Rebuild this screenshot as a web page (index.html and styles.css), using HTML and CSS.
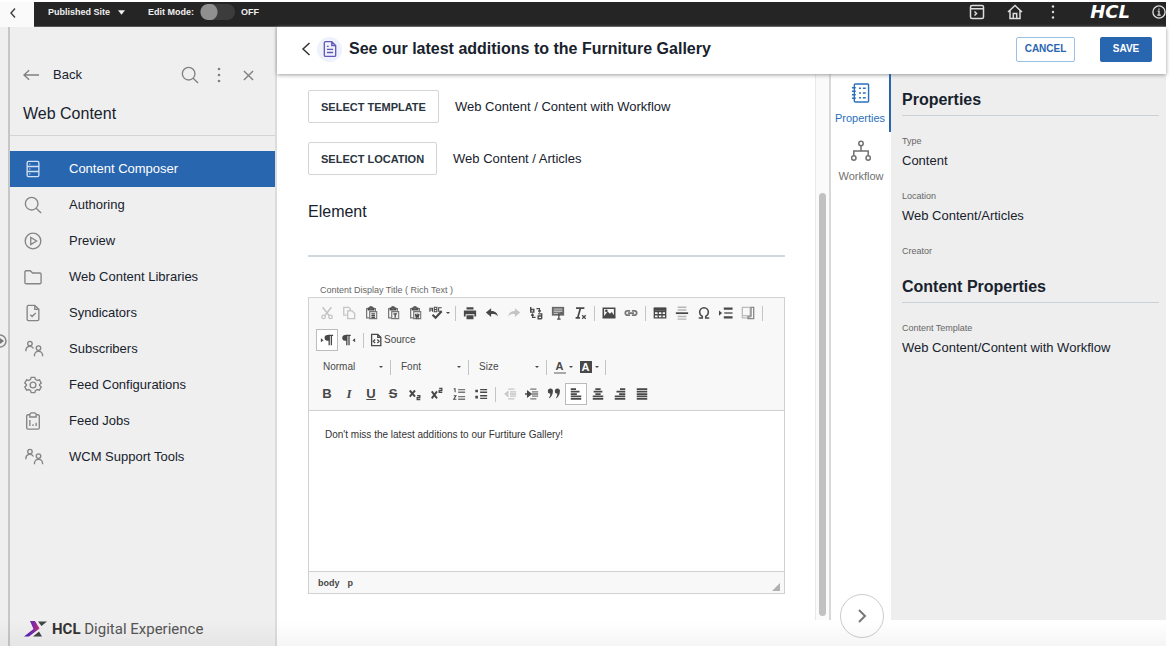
FILE: index.html
```html
<!DOCTYPE html>
<html lang="en">
<head>
<meta charset="utf-8">
<title>Web Content</title>
<link rel="stylesheet" href="styles.css">
</head>
<body>
<svg class="defs" aria-hidden="true">
  <symbol id="people" viewBox="0 0 20 20"><circle cx="5.500" cy="4" r="2.500"/><path d="M1 12.500v-1a4.500 4.500 0 0 1 8.500-2"/><circle cx="15" cy="9" r="2.500"/><path d="M10.500 18v-1a4.500 4.500 0 0 1 9 0v1"/></symbol>
  <symbol id="search" viewBox="0 0 20 20"><circle cx="8.500" cy="8.500" r="7"/><path d="M13.500 13.500L19 19"/></symbol>
  <symbol id="clip" viewBox="0 0 16 16"><path d="M11.500 3H13v4M4.500 3H3v10.500h3" fill="none" stroke="#777" stroke-width="1.400"/><path d="M5 4.500V2.500h1.500L7 1h2l.5 1.500H11v2z" fill="#777"/><path d="M6.500 6.500h8v8h-8z" fill="#eee" stroke="#777" stroke-width="1.300"/></symbol>
</svg>
<div class="app">
  <header class="topbar">
    <button class="collapse" aria-label="Collapse"><svg viewBox="0 0 10 12" width="10" height="12"><path d="M7 1.500L3 6l4 4.500"/></svg></button>
    <div class="topbar-main">
      <button class="site">Published Site <svg viewBox="0 0 8 5" width="7" height="5"><path d="M0 0h8L4 5z"/></svg></button>
      <label class="mode">Edit Mode: <input type="checkbox" role="switch" class="switch"><span>OFF</span></label>
      <nav class="tools">
        <button aria-label="Console"><svg viewBox="0 0 16 16" width="16" height="16"><rect x="1.500" y="1.500" width="13" height="13" rx="1.500"/><path d="M1.500 4.800h13M5.500 7.500l2 2-2 2"/></svg></button>
        <button aria-label="Home"><svg viewBox="0 0 16 16" width="16" height="16"><path d="M1 8l7-6.500L15 8M3 6.500v8h10v-8M6.300 14.500v-5h3.400v5"/></svg></button>
        <button aria-label="More"><svg viewBox="0 0 16 16" width="16" height="16" class="dots"><circle cx="8" cy="2.500" r="1.200"/><circle cx="8" cy="8" r="1.200"/><circle cx="8" cy="13.500" r="1.200"/></svg></button>
        <span class="brand">HCL</span>
        <button aria-label="Information"><svg viewBox="0 0 16 16" width="14" height="14"><circle cx="8" cy="8" r="7"/><path d="M6.500 7H8v4.500M6 11.500h4M8 4v1.500"/></svg></button>
      </nav>
    </div>
  </header>

  <div class="workspace">
    <div class="rail"><button class="rail-toggle" aria-label="Expand"><svg viewBox="0 0 14 14" width="14" height="14"><circle cx="7" cy="7" r="6"/><path d="M7 4l4 3-4 3z" fill="#777" stroke="none"/></svg></button></div>

    <aside class="sidebar">
      <div class="side-head">
        <div class="side-row">
          <button class="back"><svg viewBox="0 0 18 12" width="17" height="12"><path d="M17 6H1M6.500 1L1 6l5.500 5"/></svg>Back</button>
          <button aria-label="Search"><svg width="18" height="18"><use href="#search"/></svg></button>
          <button aria-label="More"><svg viewBox="0 0 4 16" width="4" height="16" class="dots"><circle cx="2" cy="2" r="1.300"/><circle cx="2" cy="8" r="1.300"/><circle cx="2" cy="14" r="1.300"/></svg></button>
          <button aria-label="Close"><svg viewBox="0 0 12 12" width="11" height="11"><path d="M1 1l10 10M11 1L1 11"/></svg></button>
        </div>
        <h2>Web Content</h2>
      </div>
      <nav class="menu">
        <a href="#" class="active"><svg viewBox="0 0 20 20" width="18" height="18"><rect x="3.500" y="1.500" width="13" height="17" rx="1.500"/><path d="M3.500 7.200h13M3.500 12.800h13M6 4.500h1M6 10h1M6 15.500h1"/></svg>Content Composer</a>
        <a href="#"><svg width="18" height="18"><use href="#search"/></svg>Authoring</a>
        <a href="#"><svg viewBox="0 0 20 20" width="18" height="18"><circle cx="10" cy="10" r="8.700"/><path d="M7.500 6v8l6.500-4z"/></svg>Preview</a>
        <a href="#"><svg viewBox="0 0 20 20" width="18" height="18"><path d="M1 4.500A1.500 1.500 0 0 1 2.500 3H7l2.500 2.500h8A1.500 1.500 0 0 1 19 7v9a1.500 1.500 0 0 1-1.500 1.500h-15A1.500 1.500 0 0 1 1 16z"/></svg>Web Content Libraries</a>
        <a href="#"><svg viewBox="0 0 20 20" width="18" height="18"><path d="M12 1.500H5A1.500 1.500 0 0 0 3.500 3v14A1.500 1.500 0 0 0 5 18.500h10a1.500 1.500 0 0 0 1.500-1.500V6zM12 1.500V6h4.500M7 12l2 2 4-4"/></svg>Syndicators</a>
        <a href="#"><svg width="20" height="18"><use href="#people"/></svg>Subscribers</a>
        <a href="#"><svg viewBox="0 0 20 20" width="18" height="18"><circle cx="10" cy="10" r="3.200"/><path d="M8 1.500h4l.7 2.300 2 1.200 2.400-.7 2 3.500L17.300 9.500v1l1.800 1.700-2 3.500-2.400-.7-2 1.200-.7 2.300H8l-.7-2.300-2-1.200-2.400.7-2-3.500 1.800-1.700v-1L.9 7.800l2-3.500 2.400.7 2-1.200z"/></svg>Feed Configurations</a>
        <a href="#"><svg viewBox="0 0 20 20" width="18" height="18"><path d="M6.500 3H4.500A1.500 1.500 0 0 0 3 4.500v13A1.500 1.500 0 0 0 4.500 19h11a1.500 1.500 0 0 0 1.500-1.500v-13A1.500 1.500 0 0 0 15.500 3h-2M6.500 5.500V2.200L8 1h4l1.500 1.200v3.300zM6.500 9v6.500M10 13.500v2M13.500 12v3.500"/></svg>Feed Jobs</a>
        <a href="#"><svg width="20" height="18"><use href="#people"/></svg>WCM Support Tools</a>
      </nav>
      <footer class="product">
        <svg viewBox="0 0 24 16" width="24" height="16"><defs><linearGradient id="arrow" x1="0" x2="1"><stop offset="0" stop-color="#4b1fb8"/><stop offset=".6" stop-color="#7a2aa8"/><stop offset="1" stop-color="#d6246e"/></linearGradient></defs><path d="M6 0h5l4.500 7.500L5 15.500H0L9.500 8z" fill="url(#arrow)"/><path d="M14 .5h9l-5.500 4.500zM15 10.500l3 5h-9z" fill="#444"/></svg>
        <span><b>HCL</b> Digital Experience</span>
      </footer>
    </aside>

    <main class="main">
      <header class="page-head">
        <button class="prev" aria-label="Back"><svg viewBox="0 0 10 16" width="10" height="16"><path d="M8.500 2L2 8l6.500 6"/></svg></button>
        <span class="doc"><svg viewBox="0 0 16 20" width="14" height="18"><path d="M10 1.500H3A1.500 1.500 0 0 0 1.500 3v14A1.500 1.500 0 0 0 3 18.500h10a1.500 1.500 0 0 0 1.500-1.500V6zM10 1.500V6h4.500M4.500 10.500h7M4.500 14h7M4.500 7h2"/></svg></span>
        <h1>See our latest additions to the Furniture Gallery</h1>
        <button class="btn cancel">CANCEL</button>
        <button class="btn save">SAVE</button>
      </header>

      <div class="panes">
        <section class="form">
          <div class="pick"><button>SELECT TEMPLATE</button><span>Web Content / Content with Workflow</span></div>
          <div class="pick"><button>SELECT LOCATION</button><span>Web Content / Articles</span></div>
          <h2>Element</h2>
          <label class="field-label" for="rich">Content Display Title ( Rich Text )</label>
          <div class="editor">
            <div class="toolbar">
              <div class="tb-row">
                <button aria-label="Cut" class="off"><svg viewBox="0 0 16 16"><path d="M3 1.500l7.500 9.500M13 1.500L5.500 11" stroke-width="1.800"/><circle cx="4" cy="12.500" r="2"/><circle cx="12" cy="12.500" r="2"/></svg></button>
                <button aria-label="Copy" class="off"><svg viewBox="0 0 16 16"><path d="M5.500 10.500H2v-9h5.500l2 2V5M6.500 5.500h5l3 3v6h-8z"/></svg></button>
                <button aria-label="Paste"><svg viewBox="0 0 16 16"><use href="#clip"/><path d="M8.500 9h4M8.500 11h4M8.500 13h4"/></svg></button>
                <button aria-label="Paste as text"><svg viewBox="0 0 16 16"><use href="#clip"/><path d="M8.500 9h4M10.500 9v4.500"/></svg></button>
                <button aria-label="Paste from Word"><svg viewBox="0 0 16 16"><use href="#clip"/><path d="M8.500 9l1 4 1-3 1 3 1-4"/></svg></button>
                <button aria-label="Spell check" class="drop"><svg viewBox="0 0 16 16"><path d="M1 6.500v-4h3v4M1 4.500h3M6 1.500v5h3v-5H6zm0 2.500h3M14.500 2H11v4h3.500" stroke-width="1.200"/><path d="M4 10l3.500 3.500L14.500 6" stroke-width="2.400"/></svg><i class="caret"></i></button>
                <i class="sep"></i>
                <button aria-label="Print"><svg viewBox="0 0 16 16"><path d="M4 1.500h8V4H4zM1 5h14v7h-2V9.500H3V12H1zM4 10.500h8V15H4z" fill="#484848" stroke="none"/></svg></button>
                <button aria-label="Undo"><svg viewBox="0 0 16 16"><path d="M7 2.500v3.200c4 0 7 2 8 6.300-2-2.500-4.500-3-8-2.800v3.300l-6-5z" fill="#484848" stroke="none"/></svg></button>
                <button aria-label="Redo"><svg viewBox="0 0 16 16"><path d="M9 2.500v3.200c-4 0-7 2-8 6.300 2-2.500 4.500-3 8-2.800v3.300l6-5z" fill="#c4c4c4" stroke="none"/></svg></button>
                <button aria-label="Replace"><svg viewBox="0 0 16 16"><path d="M2 1v6h3.500V4H2M14.500 14.500V9H10.500M14.500 11.500h-4v3h4" stroke-width="1.600"/><path d="M8.500 3H12v3M10.500 5L12 7l1.500-2M7.500 13H4v-3M2.500 11L4 9l1.500 2" stroke-width="1.200"/></svg></button>
                <button aria-label="Select all"><svg viewBox="0 0 16 16"><path d="M1 1h14v10H1z" fill="#666" stroke="none"/><path d="M3 3.500h10M3 6h10M3 8.500h7" stroke="#bbb"/><path d="M9 8v7M7 15h4"/></svg></button>
                <button aria-label="Remove format"><svg viewBox="0 0 16 16"><path d="M3.500 2.500H13M8.500 2.500L5.500 13M3 13.500h5" stroke-width="2"/><path d="M10.500 10.500l4 4M14.500 10.500l-4 4" stroke-width="1.500"/></svg></button>
                <i class="sep"></i>
                <button aria-label="Image"><svg viewBox="0 0 16 16"><path d="M1.500 2.500h13v11h-13z" stroke-width="1.800"/><path d="M3 12l3.500-4.500L9 10l2-2 3 4z" fill="#484848"/><circle cx="5" cy="5.500" r=".8"/></svg></button>
                <button aria-label="Link"><svg viewBox="0 0 16 16"><path d="M7 5.500H4a2.500 2.500 0 0 0 0 5h3M9 5.500h3a2.500 2.500 0 0 1 0 5H9M4.500 8h7" stroke="#777" stroke-width="2"/></svg></button>
                <i class="sep"></i>
                <button aria-label="Table"><svg viewBox="0 0 16 16"><path d="M1.500 2.500h13v11h-13zM1.500 10h13M6 5v8.500M10.300 5v8.500M1.500 6.500h13"/><path d="M1 2h14v3.500H1z" fill="#484848" stroke="none"/></svg></button>
                <button aria-label="Horizontal line"><svg viewBox="0 0 16 16"><path d="M3 1.500h10M3 4.500h10M3 12h10M3 15h10" stroke="#b5b5b5" stroke-width="1.600"/><path d="M1 8.200h14" stroke-width="2"/></svg></button>
                <button aria-label="Special character"><svg viewBox="0 0 16 16"><path d="M2 13.800h4v-2C3.800 10.500 3 9 3 7a5 5 0 0 1 10 0c0 2-.8 3.500-3 4.800v2h4" stroke-width="1.800"/></svg></button>
                <button aria-label="Page break"><svg viewBox="0 0 16 16"><path d="M0 5l3.500 3L0 11z" fill="#484848" stroke="none"/><path d="M5.500 3h10M5.500 13h10" stroke-width="2.600"/><path d="M6 8h9.500" stroke-width="1.500"/></svg></button>
                <button aria-label="Frame"><svg viewBox="0 0 16 16"><path d="M1.500 1.500h9v12h-9zM1.500 11h6" stroke="#bbb"/><path d="M11.500 1.500h3v13H8v-3h3.500z" stroke="#888"/></svg></button>
                <i class="sep"></i>
              </div>
              <div class="tb-row">
                <button aria-label="Left to right" class="on"><svg viewBox="0 0 16 16"><path d="M1 6l3 2.200-3 2.300z" fill="#484848" stroke="none"/><path d="M10 3H8.500a2.500 2.500 0 0 0 0 5H10z" fill="#484848"/><path d="M10.500 3v11M13 3v11M9 2.800h6" stroke-width="1.500"/></svg></button>
                <button aria-label="Right to left"><svg viewBox="0 0 16 16"><path d="M15 6l-3 2.200 3 2.300z" fill="#484848" stroke="none"/><path d="M5 3H3.500a2.500 2.500 0 0 0 0 5H5z" fill="#484848"/><path d="M5.500 3v11M8 3v11M4 2.800h6" stroke-width="1.500"/></svg></button>
                <i class="sep"></i>
                <button class="source"><svg viewBox="0 0 16 16"><path d="M10 1.500H3v13h10.500V5zM10 1.500V5h3.500M7 7.500L5 9.500l2 2M9.500 7.500l2 2-2 2"/></svg>Source</button>
              </div>
              <div class="tb-row">
                <span class="combo"><select aria-label="Paragraph format"><option>Normal</option></select><i class="caret"></i></span><i class="sep"></i>
                <span class="combo"><select aria-label="Font"><option>Font</option></select><i class="caret"></i></span><i class="sep"></i>
                <span class="combo"><select aria-label="Size"><option>Size</option></select><i class="caret"></i></span><i class="sep"></i>
                <button aria-label="Text color" class="drop"><span class="ink">A</span><i class="caret"></i></button>
                <button aria-label="Background color" class="drop"><span class="ink fill">A</span><i class="caret"></i></button>
                <i class="sep"></i>
              </div>
              <div class="tb-row">
                <button><b>B</b></button>
                <button><b class="ital">I</b></button>
                <button><b class="under">U</b></button>
                <button><b class="strike">S</b></button>
                <button aria-label="Subscript"><svg viewBox="0 0 16 16"><path d="M2 4l6 7M8 4l-6 7" stroke-width="2.200"/><path d="M10.500 10h3v2.300h-3v2.200h3.500"/></svg></button>
                <button aria-label="Superscript"><svg viewBox="0 0 16 16"><path d="M2 5l6 8M8 5l-6 8" stroke-width="2.200"/><path d="M10.500 1.500h3v2.300h-3V6H14"/></svg></button>
                <button aria-label="Numbered list"><svg viewBox="0 0 16 16"><path d="M3.500 1.500V6M2 2.500l1.500-1M2 10h2.500l-2.500 4h3" stroke-width="1.200"/><path d="M7 3h8M7 6h8M7 11h8M7 14h8" stroke="#777"/></svg></button>
                <button aria-label="Bulleted list"><svg viewBox="0 0 16 16"><path d="M1.500 3h3v3h-3zM1.500 10h3v3h-3z" fill="#484848" stroke="none"/><path d="M7 3h8M7 6h8M7 10h8M7 13h8"/></svg></button>
                <i class="sep"></i>
                <button aria-label="Outdent" class="off"><svg viewBox="0 0 16 16"><path d="M6 2.500h7M8 5.500h7M8 8h7M8 10.500h7M6 13.500h7M5.500 5.500L2.500 8l3 2.500z"/></svg></button>
                <button aria-label="Indent"><svg viewBox="0 0 16 16"><path d="M6 2.500h7M8 5.500h7M8 8h7M8 10.500h7M6 13.500h7" stroke="#777"/><path d="M3 5l4 3-4 3zM0 8h4" fill="#484848"/></svg></button>
                <button aria-label="Block quote"><svg viewBox="0 0 16 16"><path d="M1 4.500a2.800 2.800 0 1 1 5.800 0C6.800 9 4.500 12 2 13c1.200-2 1.800-3.500 1.800-5.500A2.800 2.800 0 0 1 1 4.500zM9 4.500a2.800 2.800 0 1 1 5.800 0c0 4.500-2.300 7.500-4.800 8.500 1.200-2 1.800-3.500 1.800-5.500A2.800 2.800 0 0 1 9 4.500z" fill="#484848" stroke="none"/></svg></button>
                <button aria-label="Align left" class="on"><svg viewBox="0 0 16 16" class="bars"><path d="M2 2.500h6M2 5.300h10M2 8h7M2 10.800h12M2 13.500h12"/></svg></button>
                <button aria-label="Align center"><svg viewBox="0 0 16 16" class="bars"><path d="M5 2.500h6M3 5.300h10M5 8h6M2 10.800h12M2 13.500h12"/></svg></button>
                <button aria-label="Align right"><svg viewBox="0 0 16 16" class="bars"><path d="M8 2.500h6M4 5.300h10M7 8h7M2 10.800h12M2 13.500h12"/></svg></button>
                <button aria-label="Justify"><svg viewBox="0 0 16 16" class="bars"><path d="M2 2.500h12M2 5.300h12M2 8h12M2 10.800h12M2 13.500h12"/></svg></button>
              </div>
            </div>
            <textarea id="rich">Don't miss the latest additions to our Furtiture Gallery!</textarea>
            <div class="status"><span>body</span><span>p</span><svg viewBox="0 0 8 8" width="8" height="8"><path d="M8 0v8H0z"/></svg></div>
          </div>
        </section>
        <div class="track"><div class="thumb"></div></div>
        <nav class="tabs">
          <button class="tab current"><svg viewBox="0 0 20 22" width="19" height="22"><rect x="3.500" y="1.500" width="15" height="19" rx="1"/><path d="M1 5.500h4M1 9.200h4M1 12.900h4M1 16.500h4M8.500 6h2M12.500 6h3M8.500 11h2M12.500 11h3M8.500 16h2M12.500 16h3"/></svg>Properties</button>
          <button class="tab"><svg viewBox="0 0 20 22" width="20" height="22"><circle cx="10" cy="3.500" r="2.200"/><circle cx="2.800" cy="18" r="2.200"/><circle cx="17.200" cy="18" r="2.200"/><path d="M10 5.700v5.300M2.800 15.800V11h14.400v4.800"/></svg>Workflow</button>
          <button class="next" aria-label="Next"><svg viewBox="0 0 10 16" width="10" height="16"><path d="M2 2l6 6-6 6"/></svg></button>
        </nav>
        <aside class="props">
          <h2>Properties</h2>
          <dl><dt>Type</dt><dd>Content</dd><dt>Location</dt><dd>Web Content/Articles</dd><dt>Creator</dt></dl>
          <h2>Content Properties</h2>
          <dl><dt>Content Template</dt><dd>Web Content/Content with Workflow</dd></dl>
        </aside>
      </div>
    </main>
  </div>
  <div class="fade"></div>
</div>
</body>
</html>
```
FILE: styles.css
```css
* { box-sizing: border-box; }
body { margin: 0; background: #fff; color: #17222d; font-family: "Liberation Sans", Arial, sans-serif; font-size: 13px; line-height: 16px; }
button { margin: 0; padding: 0; border: 0; background: none; color: inherit; font: inherit; display: flex; align-items: center; justify-content: center; cursor: pointer; }
h1, h2, dl, dd { margin: 0; }
svg { display: block; flex: none; fill: none; stroke: currentColor; stroke-width: 1.5; }
.defs { position: absolute; width: 0; height: 0; }
.dots { fill: currentColor; stroke: none; }
.app { position: relative; display: flex; flex-direction: column; min-height: 100vh; padding: 2px 4px 0 0; }

.topbar { display: flex; height: 25px; }
.collapse { width: 34px; background: #fafafa; color: #444; padding: 0 8px 3px 0; }
.topbar-main { flex: 1; display: flex; align-items: center; background: #252525; color: #f0f0f0; font-size: 9px; font-weight: bold; padding: 0 0 4px 14px; border-bottom: 1px solid #555; }
.site { gap: 8px; font-weight: bold; }
.site svg { fill: #f0f0f0; stroke: none; }
.mode { display: flex; align-items: center; margin-left: 23px; gap: 6px; }
.switch { appearance: none; margin: 0; width: 35px; height: 16px; border-radius: 8px; background: radial-gradient(circle at 9px 8px, #909090 8px, #3c3c3c 9px); }
.tools { display: flex; align-items: center; gap: 22px; margin-left: auto; color: #ddd; }
.brand { font: italic bold 18px/18px "DejaVu Sans", sans-serif; color: #fff; width: 54px; text-align: center; }
.tools .brand + button { margin-left: -7px; }

.workspace { flex: 1; display: flex; }
.rail { position: relative; width: 10px; background: #efefef; border-right: 2px solid #c6c6c6; overflow: hidden; }
.rail-toggle { position: absolute; top: 307px; left: -7px; color: #888; }
.sidebar { width: 267px; display: flex; flex-direction: column; background: #efefef; border-right: 2px solid #dcdcdc; }
.side-head { padding: 39px 21px 11px 13px; border-bottom: 1px solid #d4d4d4; color: #808080; }
.side-row { display: flex; align-items: center; height: 18px; gap: 18px; }
.side-row button:last-child { margin-left: 4px; }
.back { gap: 13px; margin-right: auto; color: #17222d; }
.back svg { color: #808080; }
.side-head h2 { margin-top: 20px; font-size: 16px; line-height: 20px; font-weight: normal; color: #17222d; }
.menu { padding-top: 15px; }
.menu a { display: grid; grid-template-columns: 45px 1fr; align-items: center; height: 36px; padding-left: 14px; color: #17222d; text-decoration: none; }
.menu svg { color: #858585; }
.menu .active { background: #2966b0; color: #fff; }
.menu .active svg { color: #cfe0f4; }
.product { display: flex; align-items: center; gap: 4px; margin-top: auto; padding: 0 0 8px 14px; font: 15px/18px Roboto, sans-serif; color: #555; }
.product b { color: #333; }
.product svg { stroke: none; }

.main { flex: 1; min-width: 0; display: flex; flex-direction: column; }
.page-head { position: relative; display: flex; align-items: center; height: 47px; padding: 0 14px 3px 24px; background: #fff; box-shadow: 0 1px 4px #999; }
.prev { margin-right: 6px; color: #333; }
.doc { display: grid; place-items: center; width: 25px; height: 25px; border-radius: 50%; background: #edf2fc; color: #6556b8; }
h1 { flex: 1; margin-left: 7px; font-size: 16px; line-height: 20px; }
.btn { height: 25px; border-radius: 2px; font-size: 10px; font-weight: bold; }
.cancel { width: 59px; border: 1px solid #9bbfe6; color: #2966b0; margin-right: 25px; }
.save { width: 52px; background: #2966b0; color: #fff; }

.panes { flex: 1; display: flex; margin-bottom: 26px; }
.form { flex: 1; min-width: 0; padding: 16px 30px 0 31px; }
.pick { display: flex; align-items: center; gap: 16px; margin-bottom: 19px; }
.pick button { height: 33px; padding: 0 12px; border: 1px solid #d4d4d4; border-radius: 2px; font-size: 11px; font-weight: bold; color: #2a343e; }
.form h2 { padding: 8px 0 33px; border-bottom: 2px solid #d0d7dd; font-size: 16px; line-height: 20px; font-weight: normal; }
.field-label { display: block; margin: 27px 0 1px 12px; font-size: 9px; line-height: 12px; color: #666; }
.editor { border: 1px solid #d1d1d1; color: #484848; }
.toolbar { display: flex; flex-direction: column; gap: 5px; padding: 4px 0 5px 7px; background: #f8f8f8; border-bottom: 1px solid #d1d1d1; }
.tb-row { display: flex; align-items: center; height: 22px; font-size: 10px; }
.tb-row button { width: 22px; height: 22px; }
.tb-row button svg { width: 14px; height: 14px; }
.tb-row .on { background: #fff; border: 1px solid #bcbcbc; }
.tb-row .off { color: #c4c4c4; }
.tb-row .drop { width: 26px; gap: 3px; }
.tb-row .source { width: auto; gap: 1px; padding-left: 2px; }
.tb-row b { font-size: 13px; }
.bars { stroke-width: 2; }
.ital { font-family: "Liberation Serif", serif; font-style: italic; }
.under { text-decoration: underline; }
.strike { text-decoration: line-through; }
.sep { width: 1px; height: 15px; margin: 0 3px; background: #c4c4c4; }
.caret { width: 0; height: 0; border: 2px solid transparent; border-top-color: #484848; border-bottom: 0; }
.combo { display: flex; align-items: center; width: 71px; padding-right: 4px; }
.combo select { appearance: none; flex: 1; min-width: 0; border: 0; margin: 0; padding: 0 0 0 7px; background: none; font: inherit; color: inherit; }
.ink { width: 12px; font-size: 11px; line-height: 12px; font-weight: bold; border-bottom: 2px solid #aaa; }
.fill { background: #484848; color: #fff; border: 0; }
textarea { display: block; width: 100%; height: 160px; resize: none; border: 0; padding: 16px; font: 10px/16px "Liberation Sans", Arial, sans-serif; color: #333; }
.status { display: flex; align-items: center; gap: 8px; height: 22px; padding: 0 4px 0 9px; border-top: 1px solid #d1d1d1; background: #f8f8f8; font-size: 9px; font-weight: bold; }
.status svg { margin: 8px 0 0 auto; fill: #b0b0b0; stroke: none; }

.track { display: flex; width: 16px; padding: 119px 3px 4px 3px; background: #fafafa; border-left: 1px solid #e8e8e8; border-right: 2px solid #d8d8d8; }
.thumb { flex: 1; border-radius: 4px; background: #c1c1c1; }
.tabs { position: relative; width: 60px; }
.tab { width: 100%; height: 58px; flex-direction: column; gap: 7px; padding-top: 1px; font-size: 11px; line-height: 14px; color: #707070; }
.tab.current { border-right: 2px solid #2966b0; color: #2b70bd; }
.next { position: absolute; right: 7px; bottom: -18px; width: 44px; height: 44px; border: 1px solid #ccc; border-radius: 50%; background: #fff; color: #777; }
.next svg { stroke-width: 2; }
.props { width: 275px; padding: 16px 7px 0 11px; background: #eee; }
.props h2 { padding-bottom: 5px; border-bottom: 1px solid #c9d0d6; font-size: 16px; line-height: 20px; }
dl { padding: 19px 0 20px; }
dt { font-size: 9px; line-height: 12px; color: #666; }
dd { margin: 6px 0 21px; line-height: 16px; }
.fade { position: absolute; left: 0; right: 4px; bottom: 0; height: 26px; background: linear-gradient(transparent, rgba(0, 0, 0, .04)); pointer-events: none; }
```
